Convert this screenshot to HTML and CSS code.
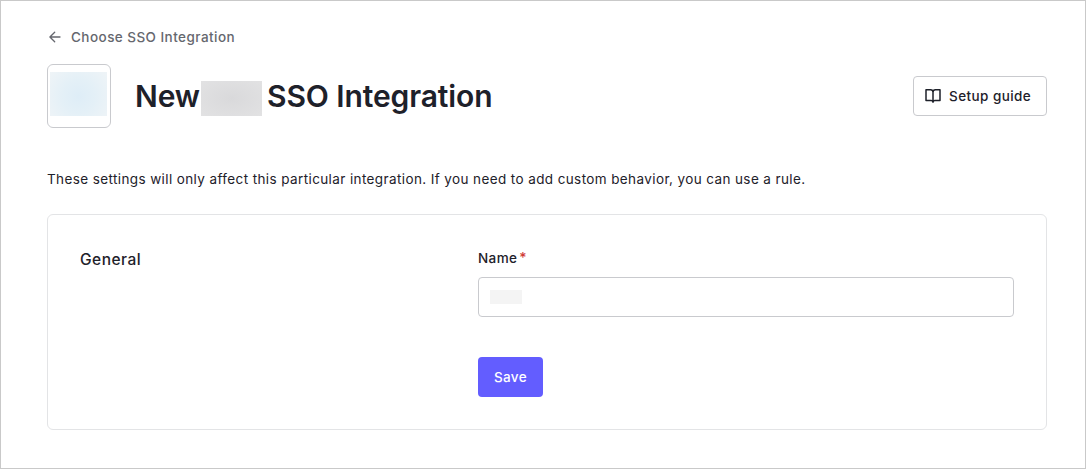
FILE: index.html
```html
<!DOCTYPE html>
<html lang="en">
<head>
<meta charset="utf-8">
<title>New SSO Integration</title>
<link rel="stylesheet" href="styles.css">
</head>
<body>
<main class="page">
  <a class="back">
    <svg class="back-icon" viewBox="0 0 16 16" fill="none" stroke="currentColor" stroke-width="1.3" stroke-linecap="round" stroke-linejoin="round"><path d="M13 8H3M7.7 3.2 2.9 8l4.8 4.8"/></svg>
    <span>Choose SSO Integration</span>
  </a>
  <header class="header">
    <div class="logo"><div class="logo-mask"></div></div>
    <h1 class="title"><span class="title-lead">New</span><span class="title-mask"></span><span>SSO Integration</span></h1>
    <button class="guide">
      <svg class="guide-icon" viewBox="0 0 16 16" fill="none" stroke="currentColor" stroke-width="1.5" stroke-linecap="round" stroke-linejoin="round"><path d="M1 1.8h4.6A2.4 2.4 0 0 1 8 4.2v10a1.9 1.9 0 0 0-1.9-1.7H1zM15 1.8h-4.6A2.4 2.4 0 0 0 8 4.2v10a1.9 1.9 0 0 1 1.9-1.7H15z"/></svg>
      <span>Setup guide</span>
    </button>
  </header>
  <p class="intro">These settings will only affect this particular integration. If you need to add custom behavior, you can use a rule.</p>
  <section class="card">
    <h2 class="section-title">General</h2>
    <form class="form">
      <div class="label"><span>Name</span><span class="required">*</span></div>
      <div class="field"><span class="field-mask"></span></div>
      <button class="save" type="button">Save</button>
    </form>
  </section>
</main>
</body>
</html>
```

FILE: styles.css
```css
* { box-sizing: border-box; }
body {
  margin: 0;
  background: #fff;
  color: #1e212a;
  font: 400 13.5px/20px Inter, "Liberation Sans", sans-serif;
  letter-spacing: 0.39px;
}
.page {
  height: 469px;
  padding: 26px 38px 38px 46px;
  border: 1px solid #c9c9c9;
}
.back {
  display: flex;
  align-items: center;
  gap: 8px;
  height: 20px;
  color: #65676e;
  font-weight: 450;
  letter-spacing: 0.45px;
}
.back-icon { width: 16px; height: 16px; }
.header {
  display: flex;
  align-items: center;
  height: 64px;
  margin-top: 17px;
}
.logo {
  width: 64px;
  height: 64px;
  padding: 7px 2px;
  border: 1px solid #c9cace;
  border-radius: 6px;
}
.logo-mask {
  width: 57px;
  height: 44px;
  background: radial-gradient(circle at 50% 55%, #deedf7 0, #e4f0f7 45%, #eff4f7 100%);
}
.title {
  display: flex;
  align-items: center;
  margin: 0 auto 0 24px;
  font-size: 30px;
  font-weight: 600;
  line-height: 44px;
  letter-spacing: -0.1px;
}
.title-lead { width: 66px; }
.title-mask {
  width: 61px;
  height: 35px;
  margin: 4px 5px 0 0;
  background: radial-gradient(ellipse at 50% 50%, #d9d9db, #e2e2e3);
}
.guide {
  display: flex;
  align-items: center;
  gap: 8px;
  width: 134px;
  height: 40px;
  padding: 0 11px;
  border: 1px solid #c9cace;
  border-radius: 4px;
  background: #fff;
  color: inherit;
  font: inherit;
  font-weight: 480;
  letter-spacing: 0.43px;
  white-space: nowrap;
}
.guide-icon { width: 16px; height: 16px; flex: none; }
.intro { margin: 41px 0 25px; }
.card {
  display: grid;
  grid-template-columns: 398px 1fr;
  height: 216px;
  padding: 32px;
  border: 1px solid #e3e4e6;
  border-radius: 6px;
}
.section-title {
  margin: 0;
  font-size: 15.5px;
  font-weight: 480;
  line-height: 26px;
  letter-spacing: 0.47px;
}
.label {
  display: flex;
  gap: 2px;
  height: 22px;
  font-weight: 480;
  line-height: 22px;
}
.required { color: #d03c38; font-size: 14px; }
.field {
  display: flex;
  align-items: center;
  height: 40px;
  margin-top: 8px;
  padding: 0 11px;
  border: 1px solid #c9cace;
  border-radius: 4px;
}
.field-mask { width: 32px; height: 14px; background: #f4f4f4; }
.save {
  width: 65px;
  height: 40px;
  margin-top: 40px;
  padding: 0;
  border: 0;
  border-radius: 4px;
  background: #635dff;
  color: #fff;
  font: inherit;
  font-weight: 480;
  letter-spacing: inherit;
}
```
